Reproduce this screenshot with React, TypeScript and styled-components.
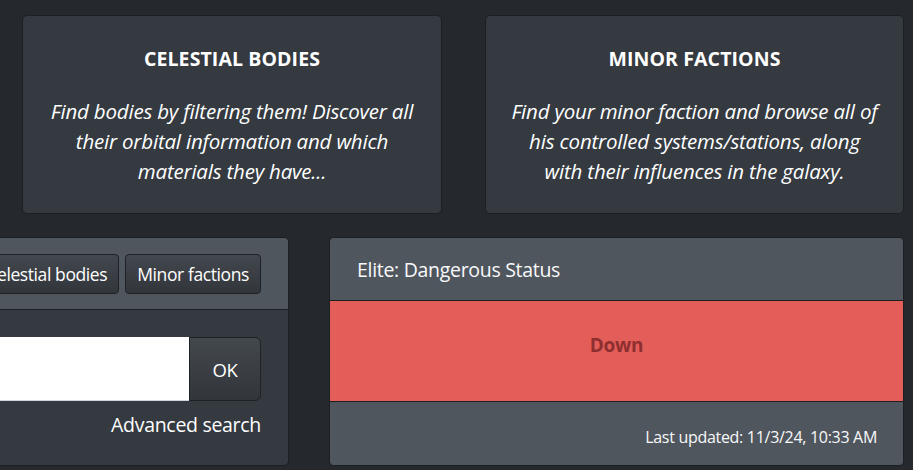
import React from "react";
import styled, { createGlobalStyle } from "styled-components";

const GlobalStyle = createGlobalStyle`
  html, body {
    margin: 0;
    padding: 0;
    background: #25282c;
    overflow: hidden;
  }
  body {
    font-family: "Open Sans", "Noto Sans", sans-serif;
    color: #f8f9fa;
  }
`;

const Page = styled.div`
  width: 913px;
  height: 470px;
  overflow: hidden;
  display: flex;
  flex-direction: column;
  gap: 23px;
  padding-top: 15px;
  box-sizing: border-box;
`;

const TopRow = styled.div`
  display: grid;
  grid-template-columns: 420px 419px;
  gap: 43px;
  padding-left: 22px;
`;

const InfoCard = styled.div`
  height: 199px;
  box-sizing: border-box;
  background: #343a40;
  border: 1px solid #1c1f23;
  border-radius: 5px;
  display: flex;
  flex-direction: column;
  align-items: center;
  padding: 30px 10px 0;
  text-align: center;
`;

const CardTitle = styled.h5`
  margin: 0 0 24px;
  font-size: 19.5px;
  line-height: 26px;
  font-weight: 700;
  letter-spacing: 0.1px;
  color: #ffffff;
`;

const CardText = styled.p`
  margin: 0;
  font-size: 20.5px;
  font-style: italic;
  line-height: 30px;
  letter-spacing: -0.2px;
  color: #ffffff;
  white-space: nowrap;
`;

const BottomRow = styled.div`
  display: flex;
  gap: 40px;
  margin-left: -34px;
`;

const Panel = styled.div<{ $width: number }>`
  width: ${(p) => p.$width}px;
  height: 229px;
  flex-shrink: 0;
  box-sizing: border-box;
  background: #343a40;
  border: 1px solid #1c1f23;
  border-radius: 5px;
  overflow: hidden;
  display: flex;
  flex-direction: column;
`;

const SearchHeader = styled.div`
  height: 72px;
  flex-shrink: 0;
  box-sizing: border-box;
  background: #50565e;
  border-bottom: 1px solid #1c1f23;
  display: flex;
  justify-content: flex-end;
  align-items: center;
  gap: 6px;
  padding: 0 27px 0 0;
`;

const DarkButton = styled.button`
  flex-shrink: 0;
  height: 40px;
  padding: 0 11px;
  background: linear-gradient(#43484e, #32363b);
  border: 1px solid #1e2125;
  border-radius: 4px;
  color: #ffffff;
  font-family: inherit;
  font-size: 17.5px;
  letter-spacing: -0.4px;
  white-space: nowrap;
`;

const SearchBody = styled.div`
  flex: 1;
  display: flex;
  flex-direction: column;
  align-items: flex-end;
  padding: 27px 27px 0 16px;
`;

const InputGroup = styled.div`
  display: flex;
  width: 100%;
  height: 64px;
`;

const SearchInput = styled.input`
  flex: 1;
  min-width: 0;
  border: none;
  border-bottom: 1px solid #ced4da;
  background: #ffffff;
  border-radius: 4px 0 0 4px;
  outline: none;
`;

const OkButton = styled(DarkButton)`
  height: 64px;
  width: 72px;
  font-size: 18.5px;
  border-radius: 0 6px 6px 0;
`;

const AdvancedLink = styled.a`
  margin-top: 10px;
  font-size: 19.5px;
  letter-spacing: -0.3px;
  color: #ffffff;
  text-decoration: none;
`;

const StatusHeader = styled.div`
  height: 63px;
  flex-shrink: 0;
  box-sizing: border-box;
  background: #50565e;
  border-bottom: 1px solid #1c1f23;
  display: flex;
  align-items: center;
  padding: 0 27px;
  font-size: 19.5px;
  letter-spacing: -0.3px;
`;

const StatusBand = styled.div<{ $bg: string; $fg: string }>`
  height: 101px;
  flex-shrink: 0;
  box-sizing: border-box;
  background: ${(p) => p.$bg};
  border-bottom: 1px solid #1c1f23;
  display: flex;
  align-items: center;
  justify-content: center;
  padding-bottom: 13px;
  color: ${(p) => p.$fg};
  font-weight: 700;
  font-size: 19px;
  letter-spacing: -0.3px;
`;

const StatusFooter = styled.div`
  flex: 1;
  background: #50565e;
  display: flex;
  align-items: center;
  justify-content: flex-end;
  padding: 6px 26px 0;
  font-size: 16px;
  letter-spacing: -0.3px;
`;

export default function App() {
  return (
    <>
      <GlobalStyle />
      <Page>
        <TopRow>
          <InfoCard>
            <CardTitle>CELESTIAL BODIES</CardTitle>
            <CardText>
              Find bodies by filtering them! Discover all
              <br />
              their orbital information and which
              <br />
              materials they have...
            </CardText>
          </InfoCard>
          <InfoCard>
            <CardTitle>MINOR FACTIONS</CardTitle>
            <CardText>
              Find your minor faction and browse all of
              <br />
              his controlled systems/stations, along
              <br />
              with their influences in the galaxy.
            </CardText>
          </InfoCard>
        </TopRow>
        <BottomRow>
          <Panel $width={323}>
            <SearchHeader>
              <DarkButton>Celestial bodies</DarkButton>
              <DarkButton>Minor factions</DarkButton>
            </SearchHeader>
            <SearchBody>
              <InputGroup>
                <SearchInput />
                <OkButton>OK</OkButton>
              </InputGroup>
              <AdvancedLink href="#">Advanced search</AdvancedLink>
            </SearchBody>
          </Panel>
          <Panel $width={575}>
            <StatusHeader>Elite: Dangerous Status</StatusHeader>
            <StatusBand $bg="#e35d59" $fg="#8e2f2f">
              Down
            </StatusBand>
            <StatusFooter>Last updated: 11/3/24, 10:33 AM</StatusFooter>
          </Panel>
        </BottomRow>
      </Page>
    </>
  );
}
